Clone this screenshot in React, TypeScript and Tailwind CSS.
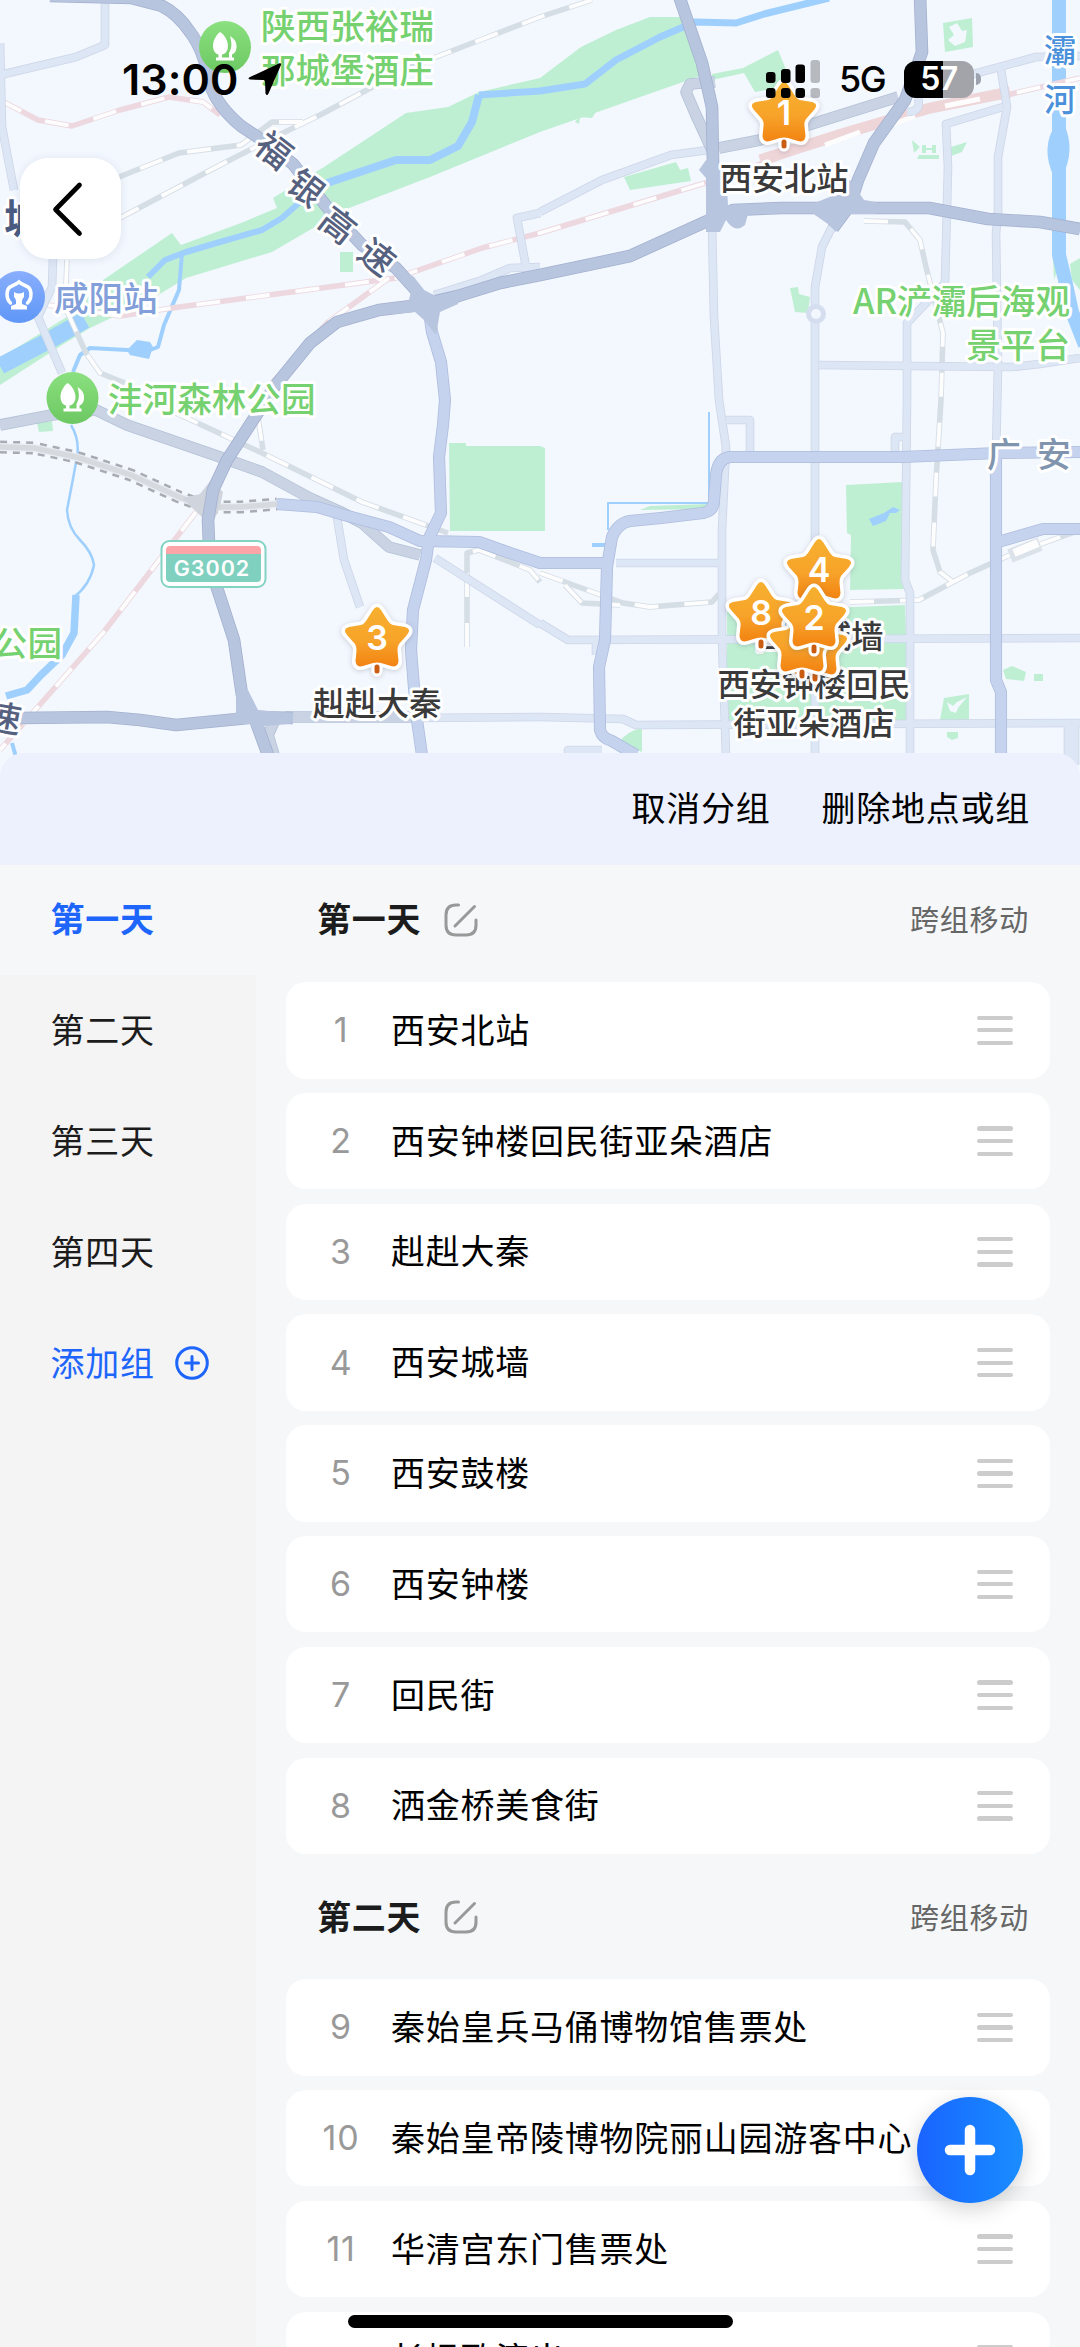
import React, { useState } from 'react';

interface Place {
  id: number;
  name: string;
}

interface DayGroup {
  id: string;
  title: string;
  places: Place[];
}

interface MapLabel {
  text: string;
  x: number;
  y: number;
  color: string;
  size?: number;
  anchor?: 'start' | 'middle' | 'end';
  rotate?: number;
  weight?: number;
}

const GROUPS: DayGroup[] = [
  {
    id: 'd1',
    title: '第一天',
    places: [
      { id: 1, name: '西安北站' },
      { id: 2, name: '西安钟楼回民街亚朵酒店' },
      { id: 3, name: '赳赳大秦' },
      { id: 4, name: '西安城墙' },
      { id: 5, name: '西安鼓楼' },
      { id: 6, name: '西安钟楼' },
      { id: 7, name: '回民街' },
      { id: 8, name: '洒金桥美食街' },
    ],
  },
  {
    id: 'd2',
    title: '第二天',
    places: [
      { id: 9, name: '秦始皇兵马俑博物馆售票处' },
      { id: 10, name: '秦始皇帝陵博物院丽山园游客中心' },
      { id: 11, name: '华清宫东门售票处' },
      { id: 12, name: '长恨歌演出' },
    ],
  },
];

const DAYS = ['第一天', '第二天', '第三天', '第四天'];

// --- Map data ---
const PARKS = [
  'M540 78 479 92 448 107 406 113 324 167 273 198 277 208 241 223 181 245 172 233 103 280 75 312 0 358V385L62 345 90 328 155 297 186 278 272 252 344 210 430 177 540 132 609 108 700 76 680 17 650 17 616 30 581 47Z',
  'M712 74 743 68 778 50 785 67 790 86 755 92 744 73 712 80Z',
  'M943 23 972 18 973 47 945 52Z',
  'M624 177 676 162 680 170 688 168 691 181 630 190Z',
  'M340 252H353V272H340Z',
  'M790 288 798 287 799 294 810 297 808 313 795 312Z',
  'M37 423 52 421 53 431 39 432Z',
  'M449 443H466V446H540L545 448V531H450Z',
  'M846 485 903 482 904 589 850 590 851 535 847 533Z',
  'M727 612 905 605 909 720 727 720Z',
  'M619 743Q626 731 642 728V752Z',
  'M944 698 969 694V720H940Z',
  'M1003 670 1012 666 1026 672 1024 681 1006 679Z',
  'M1034 674H1043V681H1034Z',
  'M575 122C582 112 590 116 597 110L592 118 580 117 579 124Z',
  'M912 140 920 147 914 153Z',
  'M919 155H939V159H917Z',
  'M922 145H926V148H932V145H936V153H932V150H926V153H922Z',
  'M948 148 967 142 962 152 951 156Z',
  'M1052 235 1058 233 1060 262 1054 280Z',
  'M1070 264 1080 258V290L1072 280Z',
  'M947 732H958V738L952 740 947 737Z',
  'M650 506 708 504 706 509 640 510Z',
];

const WATER: [string, number][] = [
  ['M829 -2 764 14 736 23 695 22 660 37 616 60 585 84 540 91 479 95', 7],
  ['M479 95 472 122 458 146 430 160 396 160 327 183', 8],
  ['M300 202 282 218 262 230 220 242 186 252 165 260 148 277', 6],
  ['M85 320 50 340 0 366', 17],
  ['M182 253 179 290 164 325 158 347 145 352 127 350 90 348 80 355 73 372', 4],
  ['M71 425Q80 440 77 457T67 510Q68 528 80 540T94 565Q90 585 74 597', 2.5],
  ['M76 595 74 633 62 655 41 675 27 690 6 696', 7.5],
  ['M12 743 16 757', 4],
  ['M1059 0V255L1065 280 1072 312 1085 345', 14],
  ['M1060 125Q1044 148 1058 176Q1072 150 1060 125', 8],
  ['M709 412V503H608V530', 2],
  ['M592 545H605', 4],
];

const LIGHT_ROADS = [
  'M105 0V45L76 57 0 75',
  'M0 43 2 127 14 190',
  'M53 258 52 287 38 317 62 373',
  'M540 213 517 218 526 267',
  'M434 295 482 280 510 268 540 267',
  'M540 212 602 180 671 155 708 150',
  'M712 225 714 317 719 400 726 447 722 530V640L726 755',
  'M833 225 822 247 815 287V755',
  'M970 75 1036 57 1080 56',
  'M1001 70 1007 107 998 157V213L996 233 998 367 996 453',
  'M1003 107 946 124 948 167 945 283 907 323V400L905 580 910 593V755',
  'M819 365 1012 367 1040 364 1080 358',
  'M616 563H722',
  'M540 623 568 640 1080 638',
  'M540 717 623 719 636 725 1080 723',
  'M568 756V750H602',
  'M596 640V655',
  'M1068 724V760M1075 724V765',
  'M726 420H750V453',
  'M895 453V437H905',
  'M337 517 344 560 360 607',
  'M435 558 540 625',
  'M413 718 540 717',
  'M918 98Q922 112 907 112',
];

const GRAY_ROADS = [
  'M0 425 52 415 96 410 127 425 220 457 262 472 310 498 341 512 362 523 389 547 420 555',
  'M719 148 760 140 815 123 898 97',
  'M715 82 690 84 686 92 695 113 712 150',
  'M285 717H413',
  'M262 718 274 722 268 735 274 755',
];

const CITY_ROADS = [
  'M428 305 432 332 441 362 445 400 443 425 439 457 441 513 429 538 426 560 413 610 411 650 416 713 422 755',
  'M277 504 317 507 344 515 389 527 420 541 479 542 510 553 540 563 605 563',
  'M1080 452 998 453 902 457 732 457Q718 457 716 475L714 500Q714 511 703 513L661 518 630 521Q618 523 612 537L607 567 605 640 599 667 600 730Q602 738 612 741L636 755',
  'M996 453V680L1001 692V755',
  'M998 542 1043 529 1080 529',
];

const MAIN_ROADS = [
  'M50 -4 131 -2 162 6Q178 14 190 32 204 50 210 84 217 106 241 126L262 140 293 164 327 207 362 245 396 268 414 288 428 305',
  'M428 303 458 296 500 283 540 275 630 256 705 222 733 210 781 208H929L988 219 1040 222 1080 229',
  'M428 304 379 310 337 322 310 343 275 386 255 417 227 460 213 490 208 520 210 567 220 597 234 640 242 695 256 722 268 755',
  'M20 718 107 717 140 720 176 725 238 719 258 717 293 718',
  'M679 -4 702 63 712 107 714 218',
  'M920 -4 922 52 905 100 874 143 858 180 850 205 833 228',
];

const GRAY_RAILS = [
  'M592 0 540 17 475 42 410 67 320 115 289 130 224 163 120 218',
  'M303 122 272 122 241 145 179 153 119 177',
  'M67 260 65 307 86 353 100 373 125 383',
  'M176 413 262 453 362 502 448 533',
  'M258 417 263 450',
  'M540 573 623 603 650 607 712 602 719 594',
  'M565 585 582 603 620 605',
  'M850 602 919 600 970 573 1010 555 1080 530',
  'M864 221 905 222 920 240 926 267 943 333 941 400 936 480 933 550 940 572 953 582',
  'M467 647V553L479 550 530 570 540 582',
];

const PINK_RAILS = [
  'M0 100 38 120 72 126 120 110 169 97 203 102 220 115',
  'M48 305 120 316 172 308 269 295 396 278 482 248 540 233 705 183 795 152 929 110 998 97 1080 78',
  'M389 278 327 323 272 383',
  'M196 512 103 633 0 750',
];

const GREEN = '#76d170';
const SLATE = '#566180';

const LABELS: MapLabel[] = [
  { text: '陕西张裕瑞', x: 261, y: 26.5, color: GREEN },
  { text: '那城堡酒庄', x: 261, y: 70.5, color: GREEN },
  { text: '沣河森林公园', x: 108, y: 399.5, color: GREEN },
  { text: '公园', x: 62, y: 643, color: GREEN, anchor: 'end' },
  { text: 'AR浐灞后海观', x: 1070, y: 301.5, color: GREEN, anchor: 'end' },
  { text: '景平台', x: 1070, y: 345, color: GREEN, anchor: 'end' },
  { text: '咸阳站', x: 54, y: 298, color: '#829fd9' },
  { text: '城', x: 4, y: 218, color: '#4a5a80', size: 40, weight: 700 },
  { text: '灞', x: 1060, y: 50, color: '#4a90da', size: 32, anchor: 'middle' },
  { text: '河', x: 1060, y: 99, color: '#4a90da', size: 32, anchor: 'middle' },
  { text: '广', x: 1004, y: 454, color: '#8094ad', size: 34, anchor: 'middle' },
  { text: '安', x: 1054, y: 454, color: '#8094ad', size: 34, anchor: 'middle' },
  { text: '福', x: 274, y: 150, color: SLATE, anchor: 'middle', rotate: 38, size: 35 },
  { text: '银', x: 306, y: 188, color: SLATE, anchor: 'middle', rotate: 38, size: 35 },
  { text: '高', x: 338, y: 225, color: SLATE, anchor: 'middle', rotate: 38, size: 35 },
  { text: '速', x: 377, y: 257, color: SLATE, anchor: 'middle', rotate: 38, size: 35 },
  { text: '速', x: 4, y: 718, color: SLATE, anchor: 'middle', rotate: 10, size: 35 },
];

const Label: React.FC<MapLabel> = ({ text, x, y, color, size = 34.6, anchor = 'start', rotate = 0, weight = 500 }) => (
  <text
    x={x}
    y={y + size * 0.37}
    fill={color}
    fontSize={size}
    fontWeight={weight}
    textAnchor={anchor}
    transform={rotate ? `rotate(${rotate} ${x} ${y})` : undefined}
    stroke="#fff"
    strokeWidth="6"
    strokeLinejoin="round"
    paintOrder="stroke"
  >
    {text}
  </text>
);

const Roads: React.FC<{ paths: string[]; width: number; fill: string; edge: string }> = ({ paths, width, fill, edge }) => (
  <g fill="none" strokeLinejoin="round">
    {paths.map(d => <path key={d} d={d} stroke={edge} strokeWidth={width + 1.6} />)}
    {paths.map(d => <path key={d + 'f'} d={d} stroke={fill} strokeWidth={width} />)}
  </g>
);

const Rails: React.FC<{ paths: string[]; color: string }> = ({ paths, color }) => (
  <g fill="none" strokeLinejoin="round">
    {paths.map(d => <path key={d} d={d} stroke={color} strokeWidth="5.5" />)}
    {paths.map(d => <path key={d + 'w'} d={d} stroke="#fdfdfd" strokeWidth="3.8" strokeDasharray="24 26" />)}
  </g>
);

// x / y is the tip of the pin
const StarPin: React.FC<{ x: number; y: number; n?: number }> = ({ x, y, n }) => (
  <g transform={`translate(${x} ${y})`}>
    <g filter="url(#pinShadow)">
      <path d="M0-9V-2" stroke="#fff" strokeWidth="11" strokeLinecap="round" />
      <path
        d="M-4-63Q0-69 4-63L11-52Q13-49 16-48L28-46Q35-44 30-38L22-29Q20-26 20.500-22L21.500-12Q21-5 14-7L4-10Q0-11-4-10L-14-7Q-21-5-21.500-12L-20.500-22Q-20-26-22-29L-30-38Q-35-44-28-46L-16-48Q-13-49-11-52Z"
        fill="url(#starFill)"
        stroke="#fff"
        strokeWidth="7"
        strokeLinejoin="round"
        paintOrder="stroke"
      />
    </g>
    <path d="M0-6V-2" stroke="#cb5d12" strokeWidth="5" strokeLinecap="round" />
    {n !== undefined && (
      <text y="-23.500" textAnchor="middle" fontSize="34" fontWeight="600" fill="#fff" fontFamily="Inter, sans-serif">{n}</text>
    )}
  </g>
);

const TreePoi: React.FC<{ x: number; y: number }> = ({ x, y }) => (
  <g transform={`translate(${x} ${y})`}>
    <circle r="26" fill="url(#poiGreen)" />
    <path d="M5-11C10-8 12-4 11.500 1 11 5 9 7 7 7.500V11H4V6C7 1 7-4 5-11Z" fill="#fff" />
    <path d="M-5-15C-10-11-12-5-12-1-12 4-9 7-6.500 7.500V10.500H-9V13.500H9V10.500H-3V7.500C1 7 3 3 3-1 3-6 0-12-5-15Z" fill="#fff" />
  </g>
);

const CityMap: React.FC = () => (
  <svg viewBox="0 0 1080 790" className="block h-[790px] w-[1080px]" fontFamily='"Noto Sans CJK SC", sans-serif'>
    <defs>
      <linearGradient id="starFill" x1="0" y1="0" x2="0" y2="1">
        <stop offset="0" stopColor="#f6b02f" />
        <stop offset="0.55" stopColor="#f7a42b" />
        <stop offset="1" stopColor="#f28312" />
      </linearGradient>
      <linearGradient id="poiGreen" x1="0" y1="0" x2="0" y2="1">
        <stop offset="0" stopColor="#8be07f" />
        <stop offset="1" stopColor="#6cc862" />
      </linearGradient>
      <linearGradient id="poiBlue" x1="0" y1="0" x2="0" y2="1">
        <stop offset="0" stopColor="#89aefc" />
        <stop offset="1" stopColor="#5f97f8" />
      </linearGradient>
      <filter id="pinShadow" x="-30%" y="-30%" width="160%" height="160%">
        <feDropShadow dx="0" dy="1" stdDeviation="2.500" floodColor="#5b5f70" floodOpacity="0.3" />
      </filter>
    </defs>
    <rect width="1080" height="790" fill="#f3f7fe" />

    <g fill="#beefd3">
      {PARKS.map(d => <path key={d} d={d} />)}
    </g>
    <path d="M949 27 957 23 962 31 967 30 965 42 955 46 948 40 954 35Z" fill="#f3f7fe" />
    <path d="M947 702 953 706 957 702 967 697 958 708 956 713 950 711Z" fill="#f3f7fe" />
    <g fill="none" stroke="#9fd0fd" strokeLinejoin="round">
      {WATER.map(([d, w]) => <path key={d} d={d} strokeWidth={w} />)}
    </g>
    <path d="M127 350 137 340 150 342 153 347 149 359 130 355Z" fill="#9fd0fd" />
    <path d="M869 519 884 513 893 507 900 510 896 513 890 513 886 521 873 526Z" fill="#9fd0fd" />
    <path d="M53 328 70 322 66 338 56 338Z" fill="#9fd0fd" />

    <Rails paths={GRAY_RAILS} color="#d5dde5" />
    <Rails paths={PINK_RAILS} color="#ecd8de" />
    <path d="M760 160 845 133 930 108 1010 92" fill="none" stroke="#eed5d8" strokeWidth="11" />
    <path d="M825 145 860 132M888 126 915 116M945 106 980 99" stroke="#fdfdfd" strokeWidth="5" />
    <path d="M1010 556 1040 544" stroke="#dbe2e9" strokeWidth="14" />
    <path d="M1014 553 1038 543" stroke="#fdfdfd" strokeWidth="8" />

    <Roads paths={LIGHT_ROADS} width={7} fill="#dde6f5" edge="#cdd6e8" />
    <circle cx="816" cy="314" r="7.500" fill="#f3f7fe" stroke="#d5deef" strokeWidth="5" />

    {/* tunnel section */}
    <g fill="none">
      <path d="M0 447 34 448 76 457 131 475 179 497 207 507 241 507 277 504" stroke="#a8abb1" strokeWidth="13" strokeDasharray="7 6" />
      <path d="M0 447 34 448 76 457 131 475 179 497 207 507 241 507 277 504" stroke="#e9edf4" strokeWidth="8" />
      <path d="M0 447 34 448 76 457 131 475 179 497 207 507 241 507 277 504" stroke="#d6d9de" strokeWidth="5.500" />
      <path d="M183 498 200 494 211 480 223 492 220 507 214 520 203 518 190 506Z" fill="#d0d5dd" />
    </g>

    <Roads paths={GRAY_ROADS} width={10} fill="#c9d3e4" edge="#b4c1d6" />
    <Roads paths={CITY_ROADS} width={10.5} fill="#c5d3ef" edge="#aebddd" />
    <Roads paths={MAIN_ROADS} width={11} fill="#b8c5df" edge="#a3b1cf" />
    <path d="M396 266 414 277 424 290 436 296 460 290 458 304 440 312 436 335 424 320 415 312 390 314 408 303 411 292Z" fill="#b8c5df" />
    <path d="M236 690 248 690 258 710 280 712 290 724 264 726 266 742 250 724 226 724 236 712Z" fill="#b8c5df" />
    <path d="M706 160 699 170 706 178 706 232H720L726 220Q735 234 745 225L748 214 728 205 726 170Z" fill="#b8c5df" />
    <path d="M812 204 832 196 850 180 864 200 876 202V214H850L836 232 828 224 812 213Z" fill="#b8c5df" />

    {LABELS.map(l => <Label key={l.text + l.x} {...l} />)}

    <TreePoi x={225} y={47} />
    <TreePoi x={72.5} y={398} />
    <circle cx="19" cy="297" r="26" fill="url(#poiBlue)" />
    <path d="M10.500 303C6 299 6 290 10 287 13 285 17 284 19 282 21 284 25 285 28 287 32 290 32 299 27.500 303" fill="none" stroke="#fff" strokeWidth="3.500" strokeLinecap="round" />
    <path d="M14 292Q19 295 24 292V297Q21.500 299 22 304L27 306V309.500H11V306L16 304Q16.500 299 14 297Z" fill="#fff" />

    {/* expressway shield */}
    <g>
      <rect x="161.500" y="541" width="104" height="46" rx="8" fill="#fff" stroke="#83d3c3" strokeWidth="2" />
      <path d="M166 554V550Q166 546 170 546H257Q261 546 261 550V554Z" fill="#fca5a9" />
      <path d="M166 554H261V578Q261 582 257 582H170Q166 582 166 578Z" fill="#80d0c0" />
      <text x="212" y="575.500" textAnchor="middle" fontSize="21.500" fontWeight="600" letterSpacing="1" fill="#fff" fontFamily="Inter, sans-serif">G3002</text>
    </g>

    <StarPin x={784} y={148} n={1} />
    <Label text="西安北站" x={784} y={178} color="#3a3a3a" size={32.2} anchor="middle" />
    <StarPin x={377} y={673} n={3} />
    <Label text="赳赳大秦" x={377} y={703} color="#3a3a3a" size={32.2} anchor="middle" />
    <Label text="西安城墙" x={819} y={636} color="#3a3a3a" size={32.2} anchor="middle" />
    <Label text="西安钟楼回民" x={814} y={684} color="#3a3a3a" size={32.2} anchor="middle" />
    <Label text="街亚朵酒店" x={814} y={723} color="#3a3a3a" size={32.2} anchor="middle" />
    <StarPin x={819} y={605} n={4} />
    <StarPin x={761} y={648} n={8} />
    <StarPin x={815} y={681} />
    <StarPin x={802} y={678} />
    <StarPin x={814} y={653} n={2} />
  </svg>
);

const StatusBar: React.FC = () => (
  <div className="absolute inset-x-0 top-[52px] flex h-[54px] items-center justify-between pr-[99px] pl-[122px] font-[Inter,sans-serif] text-black">
    <div className="flex items-center gap-2.5">
      <span className="text-[43px] leading-none font-semibold tracking-[0.1px]">13:00</span>
      <svg viewBox="0 0 34 34" className="size-[34px]">
        <path d="M31.500 1.200Q33.500.800 33 3L20.500 31.500Q19 34.500 17.500 31.500L17 19.500Q16.900 18 15.500 18L2 17.500Q-1 16.500 2 15Z" fill="#000" />
      </svg>
    </div>
    <div className="flex items-center">
      <svg viewBox="0 0 55 38" className="mr-[18px] h-[38px] w-[55px]">
        <g fill="#000">
          <rect x="0" y="12" width="9.500" height="11" rx="3" />
          <rect x="15" y="9" width="9.500" height="14" rx="3" />
          <rect x="29.500" y="4.500" width="9.500" height="18.500" rx="3" />
          <rect x="0" y="28" width="9.500" height="10" rx="3" />
          <rect x="15" y="28" width="9.500" height="10" rx="3" />
          <rect x="29.500" y="28" width="9.500" height="10" rx="3" />
        </g>
        <g fill="#000" fillOpacity="0.25">
          <rect x="44.500" y="0" width="9.500" height="23" rx="3" />
          <rect x="44.500" y="28" width="9.500" height="10" rx="3" />
        </g>
      </svg>
      <span className="mr-[19px] text-[36px] leading-none font-medium tracking-[-1.6px]">5G</span>
      <div className="relative flex h-[37px] w-[70px] items-center justify-center overflow-hidden rounded-[12px] bg-[#a2a4aa]">
        <div className="absolute inset-y-0 left-0 w-[39px] bg-black" />
        <span className="relative text-[32px] leading-none font-semibold tracking-[-0.5px] text-white">57</span>
      </div>
      <div className="ml-[2px] h-3 w-[5px] rounded-r-full bg-[#9da3ae]" />
    </div>
  </div>
);

const EditIcon: React.FC = () => (
  <svg viewBox="0 0 34 34" className="size-[34px]" fill="none" stroke="#999" strokeWidth="3" strokeLinecap="round">
    <path d="M14.500 2H12Q2 2 2 12V22Q2 32 12 32H22Q32 32 32 22V17" />
    <path d="M11 23 30.500 3.500" />
  </svg>
);

const DragHandle: React.FC = () => (
  <div className="flex w-[36px] flex-col gap-[8.4px]">
    <span className="h-[4.2px] rounded-full bg-[#ccc]" />
    <span className="h-[4.2px] rounded-full bg-[#ccc]" />
    <span className="h-[4.2px] rounded-full bg-[#ccc]" />
  </div>
);

const PlaceRow: React.FC<{ place: Place }> = ({ place }) => (
  <div className="h-[110.8px] shrink-0 pt-[6.8px] pb-[7.6px]">
    <div className="flex h-full items-center rounded-[20px] bg-white pr-[37px] pl-[21px]">
      <span className="w-[68px] text-center font-[Inter,sans-serif] text-[34px] text-[#999]">{place.id}</span>
      <span className="ml-4 flex-1 pb-[3px] whitespace-nowrap text-black">{place.name}</span>
      <DragHandle />
    </div>
  </div>
);

const App: React.FC = () => {
  const [activeDay, setActiveDay] = useState('第一天');

  return (
    <div className="relative flex h-[2347px] w-[1080px] flex-col overflow-hidden bg-[#f5f7f8] font-['Noto_Sans_CJK_SC',sans-serif] text-[34px] leading-none tracking-[0.75px]">
      {/* Map */}
      <div className="relative h-[753px] shrink-0 tracking-normal">
        <CityMap />
        <StatusBar />
        <button className="absolute top-[158px] left-[20px] flex size-[101px] items-center justify-center rounded-[28px] bg-white shadow-[0_1px_8px_rgba(60,80,120,0.12)]">
          <svg viewBox="0 0 40 60" className="mr-1.5 h-[60px] w-[40px]" fill="none" stroke="#000" strokeWidth="4.700" strokeLinecap="round" strokeLinejoin="round">
            <path d="M31.500 6 7.500 30.500 31.500 54.500" />
          </svg>
        </button>
      </div>

      {/* Toolbar */}
      <div className="relative flex h-[111.500px] shrink-0 items-center justify-end gap-[51px] rounded-t-[24px] bg-[#edf1fe] pr-[50px] pb-[3px] text-black">
        <button>取消分组</button>
        <button>删除地点或组</button>
      </div>

      <div className="relative flex min-h-0 flex-1 bg-[#f5f7f8]">
        {/* Day tabs */}
        <div className="flex w-[256px] flex-col bg-[#f4f4f4]">
          {DAYS.map(day => (
            <button
              key={day}
              onClick={() => setActiveDay(day)}
              className={day === activeDay
                ? 'h-[110.8px] bg-[#f5f7f8] pb-[3px] pl-[50.5px] text-left font-bold text-[#1e66fb]'
                : 'h-[110.8px] pb-[3px] pl-[50.5px] text-left text-[#1c1c1c]'}
            >
              {day}
            </button>
          ))}
          <button className="flex h-[110.8px] items-center pl-[50.5px] text-[#1e66fb]">
            <span className="pb-[3px]">添加组</span>
            <svg viewBox="0 0 34 34" className="ml-[20px] size-[34px]" fill="none" stroke="#1e66fb" strokeWidth="3" strokeLinecap="round">
              <circle cx="17" cy="17" r="15.300" />
              <path d="M17 10.500V23.500M10.500 17H23.500" />
            </svg>
          </button>
        </div>

        {/* Place list */}
        <div className="flex flex-1 flex-col overflow-hidden pr-[30px] pl-[30px]">
          {GROUPS.map(group => (
            <React.Fragment key={group.id}>
              <div className="flex h-[110.8px] shrink-0 items-center pr-[21px] pl-[31px]">
                <span className="mr-[23px] pb-[3px] font-bold text-[#1c1c1c]">{group.title}</span>
                <EditIcon />
                <button className="ml-auto pb-[2px] text-[29px] text-[#666]">跨组移动</button>
              </div>
              {group.places.map(place => <PlaceRow key={place.id} place={place} />)}
            </React.Fragment>
          ))}
        </div>
      </div>

      {/* Floating add button */}
      <button className="absolute top-[2097px] left-[917px] flex size-[106px] items-center justify-center rounded-full bg-linear-to-r from-[#1b63ff] to-[#1b8dff] shadow-[0_6px_22px_rgba(0,0,0,0.18)]">
        <svg viewBox="0 0 52 52" className="size-[52px]" stroke="#fff" strokeWidth="10.500" strokeLinecap="round">
          <path d="M26 6V46M6 26H46" />
        </svg>
      </button>

      {/* Home indicator */}
      <div className="absolute top-[2315px] left-[348px] h-[12.700px] w-[385px] rounded-full bg-black" />
    </div>
  );
};

export default App;
